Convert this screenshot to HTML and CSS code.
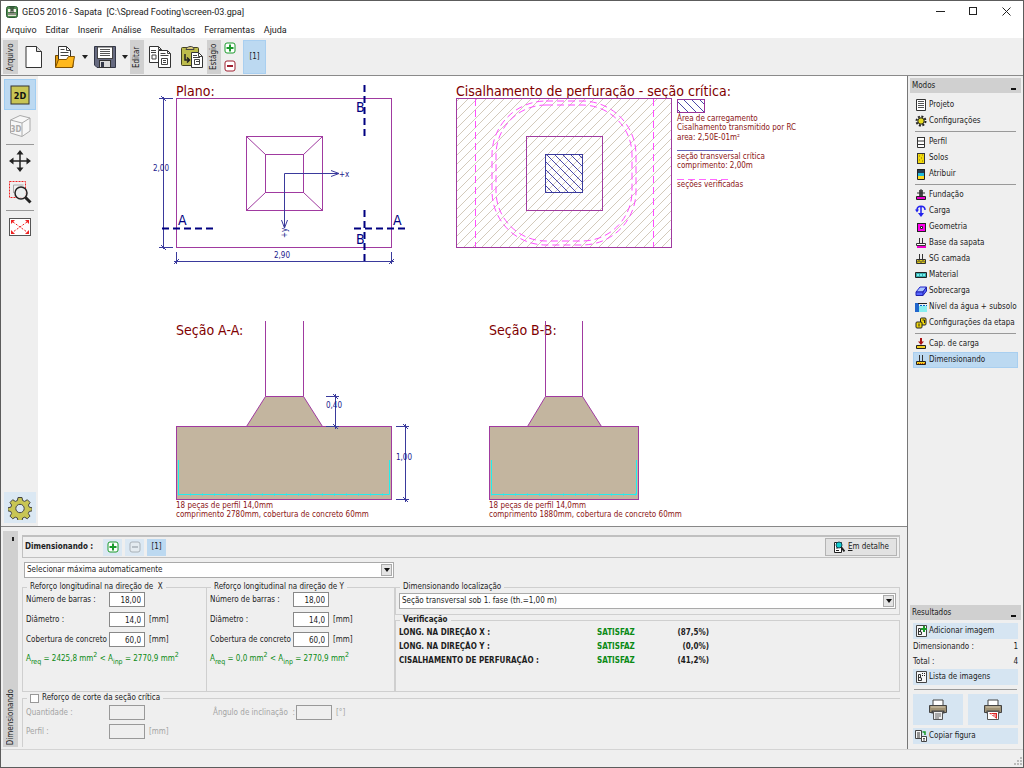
FILE: index.html
```html
<!DOCTYPE html>
<html lang="pt">
<head>
<meta charset="utf-8">
<title>GEO5 2016 - Sapata</title>
<link rel="stylesheet" href="styles.css">
</head>
<body>
<div class="window">
  <header class="titlebar">
    <svg class="app-icon" width="12" height="12" viewBox="0 0 12 12"><rect x=".5" y=".5" width="11" height="11" rx="2" fill="#4f8a4f" stroke="#2c5a34"/><path d="M2 3h3v2h2V3h3v3H2z" fill="#f4f4ea"/><path d="M2 7h8v3H2z" fill="#dfe8d0"/><path d="M5 1v6M7 1v6M2 8h8" stroke="#333"/></svg>
    <h1 class="title">GEO5 2016 - Sapata &nbsp;[C:\Spread Footing\screen-03.gpa]</h1>
    <div class="controls">
      <button class="control" aria-label="Minimizar"><svg width="9" height="9"><path d="M0 4.500h9" stroke="#222"/></svg></button>
      <button class="control" aria-label="Maximizar"><svg width="9" height="9"><rect x=".5" y=".5" width="7" height="7" fill="none" stroke="#222"/></svg></button>
      <button class="control" aria-label="Fechar"><svg width="9" height="9"><path d="M.5.5l8 8M8.500.5l-8 8" stroke="#222"/></svg></button>
    </div>
  </header>
  <nav class="menubar">
    <a href="#">Arquivo</a><a href="#">Editar</a><a href="#">Inserir</a><a href="#">Análise</a><a href="#">Resultados</a><a href="#">Ferramentas</a><a href="#">Ajuda</a>
  </nav>
  <div class="toolbar">
    <span class="vtab">Arquivo</span>
    <button class="tool tool-new" aria-label="Novo"><svg width="18" height="24"><path d="M1 1.500h10.500l5 5V22.500H1z" fill="#fff" stroke="#333"/><path d="M11.500 1.500v5h5" fill="#ddd" stroke="#333"/></svg></button>
    <button class="tool tool-open" aria-label="Abrir"><svg width="22" height="24"><path d="M1.500 22V10.500h4l1 2H19v9.500z" fill="#e39b0b" stroke="#704800"/><path d="M4.500 1.500h8l4 4V16h-12z" fill="#fff" stroke="#333"/><path d="M12.500 1.500v4h4M6.500 4.500h4M6.500 7.500h8M6.500 10.500h8" fill="none" stroke="#444"/><path d="M1.500 22.500l3-8h8l2-3h6l-2 11z" fill="#ffb81c" stroke="#805000"/></svg></button>
    <button class="tool tool-drop" aria-label="Abrir recente"><svg width="6" height="4"><path d="M0 0h6L3 4z" fill="#222"/></svg></button>
    <button class="tool tool-save" aria-label="Salvar"><svg width="24" height="24"><path d="M1.500 1.500h21v21H4l-2.500-2.500z" fill="#666a80" stroke="#333747"/><rect x="4.500" y="2" width="15" height="11.500" fill="#fff" stroke="#444"/><path d="M7 4.500h10M7 6.500h10M7 8.500h10M7 10.500h10" stroke="#555"/><rect x="6.500" y="15.500" width="11" height="7" fill="#d9d9d9" stroke="#333"/><rect x="8" y="17" width="3" height="5" fill="#333747"/></svg></button>
    <button class="tool tool-drop" aria-label="Opções de salvar"><svg width="6" height="4"><path d="M0 0h6L3 4z" fill="#222"/></svg></button>
    <span class="vtab vtab-narrow">Editar</span>
    <button class="tool tool-copy" aria-label="Copiar"><svg width="24" height="24"><path d="M1.500 1.500h9l3 3V17.500h-12z" fill="#fff" stroke="#333"/><path d="M10.500 1.500v3h3M3 5.500h5M3 7.500h5M4 10h4v4H4z" fill="none" stroke="#444"/><path d="M10.500 5.500h9l3 3V22.500h-12z" fill="#fff" stroke="#333"/><path d="M19.500 5.500v3h3M12.500 8.500h5M12.500 10.500h8M13.500 13.500h6v6h-6zM15 15.500h3M15 17.500h3" fill="none" stroke="#444"/></svg></button>
    <button class="tool tool-paste" aria-label="Colar"><svg width="24" height="24"><rect x="1.500" y="2.500" width="17" height="18" rx="1" fill="#bdbc4b" stroke="#444220"/><path d="M6 4.500c0-3 8-5 8 0z" fill="#d9c979" stroke="#444"/><path d="M5 9v6h4M7 12.500l2.500 2.500L7 17.500" fill="none" stroke="#222" stroke-width="1.500"/><path d="M11.500 7.500h7l4 4V22.500h-11z" fill="#fff" stroke="#333"/><path d="M18.500 7.500v4h4M13 10.500h4M13 12.500h7M14.500 14.500h5v5h-5zM16 16.500h3" fill="none" stroke="#444"/></svg></button>
    <span class="vtab vtab-narrow">Estágio</span>
    <div class="stage-edit">
      <button class="tool" aria-label="Adicionar estágio"><svg width="12" height="12"><rect x="1" y="1" width="10" height="10" rx="2" fill="#fff" stroke="#1b9a2c"/><path d="M6 2.500v7M2.500 6h7" stroke="#1b9a2c" stroke-width="2"/></svg></button>
      <button class="tool" aria-label="Remover estágio"><svg width="12" height="12"><rect x="1" y="1" width="10" height="10" rx="2" fill="#fff" stroke="#a02030"/><path d="M3 6h6" stroke="#a02030" stroke-width="2"/></svg></button>
    </div>
    <button class="stage">[1]</button>
  </div>

  <div class="main">
    <div class="work">
      <div class="view">
        <aside class="viewtools">
          <button class="vt vt-on" aria-label="Vista 2D"><svg width="20" height="20"><rect x="1" y="1" width="18" height="18" fill="#c8c554" stroke="#333"/><text x="10" y="14" class="ic2d">2D</text></svg></button>
          <button class="vt" aria-label="Vista 3D"><svg width="22" height="24"><path d="M1.500 6L11 1.500l10 2.500v13L13 22.500 1.500 19z" fill="#f7f7f7" stroke="#aaa"/><path d="M1.500 6L13 9v13M13 9l8-5" fill="none" stroke="#aaa"/><text x="7" y="18" class="ic3d">3D</text></svg></button>
          <hr>
          <button class="vt" aria-label="Mover"><svg width="22" height="22"><path d="M11 2v18M2 11h18" stroke="#222" stroke-width="1.500"/><path d="M11 0l3.500 4.500h-7zM11 22l3.500-4.500h-7zM0 11l4.500-3.500v7zM22 11l-4.500-3.500v7z" fill="#222"/></svg></button>
          <button class="vt" aria-label="Zoom"><svg width="24" height="24"><rect x="1.500" y="1.500" width="16" height="16" fill="none" stroke="#e22" stroke-dasharray="2 1"/><path d="M5.500 13v-8h10" fill="none" stroke="#aaa"/><circle cx="13" cy="13" r="6" fill="#e8eeee" fill-opacity=".8" stroke="#222" stroke-width="1.500"/><path d="M17.500 17.500l5 5" stroke="#222" stroke-width="3"/></svg></button>
          <hr>
          <button class="vt" aria-label="Ajustar"><svg width="22" height="18"><rect x=".5" y=".5" width="21" height="17" fill="#fff" stroke="#555"/><path d="M4 4l14 10M18 4L4 14" stroke="#e22" stroke-dasharray="2 1.500"/><path d="M2 2h4L2 6zM20 2v4l-4-4zM2 16v-4l4 4zM20 16h-4l4-4z" fill="#e22"/></svg></button>
          <button class="vt vt-gear" aria-label="Configurações"><svg width="24" height="24" viewBox="-12 -12 24 24"><path d="M-2-10.500h4l.6 3 2.100.9 2.600-1.700 2.800 2.800-1.700 2.600.9 2.100 2.900.6v3l-3 .7-.9 2 1.700 2.600-2.700 2.700-2.600-1.600-2.100.8-.6 3h-4l-.6-3-2.100-.8-2.600 1.600-2.700-2.700 1.600-2.600-.8-2-3-.7v-3l3-.6.8-2.100-1.600-2.600 2.700-2.800 2.600 1.700 2.100-.9z" fill="#c8c554" stroke="#444"/><circle r="4.200" cy=".5" fill="#dbe8f3" stroke="#444"/></svg></button>
        </aside>
        <div class="canvas">
<svg class="drawing" width="869" height="448" viewBox="38 76 869 448" role="img" aria-label="Desenho da sapata">
  <defs>
    <pattern id="soil" width="9" height="9" patternUnits="userSpaceOnUse"><path d="M-1 10L10-1M-1 1l2-2M8 10l2-2" stroke="#d3cabb"/></pattern>
    <pattern id="load" width="8" height="8" patternUnits="userSpaceOnUse"><path d="M-1-1l10 10M7-1l2 2M-1 7l2 2" stroke="#4848a8"/></pattern>
  </defs>
  <text x="176" y="96" class="head">Plano:</text>
  <g class="edge"><rect x="176.500" y="98.500" width="215" height="149"/><rect x="246.500" y="136.500" width="76" height="74"/><rect x="265.500" y="154.500" width="38" height="38"/><path d="M246.500 136.500l19 18M322.500 136.500l-19 18M246.500 210.500l19-18M322.500 210.500l-19-18"/></g>
  <g class="dim">
    <path d="M163.500 97v152M159 98.500h14M159 247.500h14M161 96l5 5M161 245l5 5M176.500 252v12M391.500 252v12M174 261.500h220M174 264l5-5M389 264l5-5"/>
    <path d="M284.500 228v-54.500H339M331 170.500l8 3-8 3M281.500 220l3 8 3-8"/>
  </g>
  <g class="cut"><path d="M162 228.500h52M405 228.500h-52M364.500 85v52M364.500 261v-52"/></g>
  <text x="153" y="171" class="dimt">2,00</text><text x="274" y="258" class="dimt">2,90</text>
  <text x="339" y="177" class="dimt">+x</text><text class="dimt" transform="translate(287 238) rotate(-90)">+y</text>
  <text x="178" y="225" class="cutt">A</text><text x="393" y="225" class="cutt">A</text><text x="356" y="112" class="cutt">B</text><text x="356" y="244" class="cutt">B</text>

  <text x="456" y="96" class="head">Cisalhamento de perfuração - seção crítica:</text>
  <g class="edge"><rect x="456.500" y="98.500" width="215" height="149" fill="url(#soil)"/><rect x="526.500" y="136.500" width="76" height="74"/></g>
  <rect x="545.500" y="154.500" width="37" height="38" fill="url(#load)" stroke="#3a3a9c"/>
  <g class="check"><path d="M475.500 99v148M653.500 99v148"/><rect x="492" y="101" width="144" height="144" rx="54"/><rect x="496" y="105" width="136" height="136" rx="50"/></g>
  <rect x="677.500" y="99.500" width="27" height="13" fill="url(#load)" stroke="#993399"/>
  <text x="677" y="121" class="note">Área de carregamento</text><text x="677" y="130" class="note">Cisalhamento transmitido por RC</text><text x="677" y="140" class="note">area: 2,50E-01m²</text>
  <path d="M677 150.500h56" stroke="#6666b8"/>
  <text x="677" y="159" class="note">seção transversal crítica</text><text x="677" y="168" class="note">comprimento: 2,00m</text>
  <path d="M677 179.500h52" stroke="#ff66ff" stroke-dasharray="7 4"/>
  <text x="677" y="187" class="note">seções verificadas</text>

  <text x="176" y="335" class="head">Seção A-A:</text>
  <g class="solid"><path d="M265.500 321v75.500M303.500 321v75.500" fill="none"/><path d="M265.500 396.500h38l19 30h-76z"/><rect x="176.500" y="426.500" width="215" height="73"/></g>
  <path d="M178.500 460v34.500h211V460" class="bar"/><path d="M178 494.500h212" class="bardots"/>
  <g class="dim"><path d="M335.500 394v35M326 396.500h13M326 426.500h13M333 394l5 5M333 424l5 5M405.500 424v78M396 426.500h13M396 499.500h13M403 424l5 5M403 497l5 5"/></g>
  <text x="326" y="408" class="dimt">0,40</text><text x="396" y="460" class="dimt">1,00</text>
  <text x="176" y="508" class="note">18 peças de perfil 14,0mm</text><text x="176" y="517" class="note">comprimento 2780mm, cobertura de concreto 60mm</text>

  <text x="489" y="335" class="head">Seção B-B:</text>
  <g class="solid"><path d="M545.500 321v75.500M582.500 321v75.500" fill="none"/><path d="M545.500 396.500h37l19 30h-74z"/><rect x="489.500" y="426.500" width="149" height="73"/></g>
  <path d="M491.500 460v34.500h145V460" class="bar"/><path d="M491 494.500h146" class="bardots"/>
  <text x="489" y="508" class="note">18 peças de perfil 14,0mm</text><text x="489" y="517" class="note">comprimento 1880mm, cobertura de concreto 60mm</text>
</svg>
        </div>
      </div>

      <section class="panel">
        <div class="side"><span class="pin"></span><span class="side-label">Dimensionando</span></div>
        <div class="form">
          <div class="formhead">
            <strong>Dimensionando :</strong>
            <button class="sq" aria-label="Adicionar"><svg width="12" height="12"><rect x="1" y="1" width="10" height="10" rx="2" fill="#fff" stroke="#1b9a2c"/><path d="M6 2.500v7M2.500 6h7" stroke="#1b9a2c" stroke-width="2"/></svg></button>
            <button class="sq" aria-label="Remover"><svg width="12" height="12"><rect x="1" y="1" width="10" height="10" rx="2" fill="#e4ebf0" stroke="#a9b1b8"/><path d="M3 6h6" stroke="#a9b1b8" stroke-width="1.500"/></svg></button>
            <button class="sq sq-on">[1]</button>
            <button class="detail"><svg width="12" height="12"><path d="M1.500 1.500h7v10h-7z" fill="#fff" stroke="#222"/><path d="M3 7h2M3 9.500h3" stroke="#222"/><circle cx="6" cy="4" r="3" fill="#1cc" stroke="#145"/><path d="M8 6l3.500 4.500" stroke="#222" stroke-width="2"/></svg><span><u>E</u>m detalhe</span></button>
          </div>
          <div class="combo combo-mode"><select aria-label="Modo de seleção"><option>Selecionar máxima automaticamente</option></select><span class="arrow"></span></div>
          <div class="groups">
            <fieldset class="group group-x">
              <legend>Reforço longitudinal na direção de &nbsp;X</legend>
              <div class="row"><label for="nx">Número de barras :</label><input id="nx" value="18,00"></div>
              <div class="row"><label for="dx">Diâmetro :</label><input id="dx" value="14,0"><span>[mm]</span></div>
              <div class="row"><label for="cx">Cobertura de concreto</label><input id="cx" value="60,0"><span>[mm]</span></div>
              <p class="area">A<sub>req</sub> = 2425,8 mm<sup>2</sup> &lt; A<sub>inp</sub> = 2770,9 mm<sup>2</sup></p>
            </fieldset>
            <fieldset class="group group-y">
              <legend>Reforço longitudinal na direção de Y</legend>
              <div class="row"><label for="ny">Número de barras :</label><input id="ny" value="18,00"></div>
              <div class="row"><label for="dy">Diâmetro :</label><input id="dy" value="14,0"><span>[mm]</span></div>
              <div class="row"><label for="cy">Cobertura de concreto</label><input id="cy" value="60,0"><span>[mm]</span></div>
              <p class="area">A<sub>req</sub> = 0,0 mm<sup>2</sup> &lt; A<sub>inp</sub> = 2770,9 mm<sup>2</sup></p>
            </fieldset>
            <div class="rightgroups">
              <fieldset class="group group-loc">
                <legend>Dimensionando localização</legend>
                <div class="combo"><select aria-label="Dimensionando localização"><option>Seção transversal sob 1. fase (th.=1,00 m)</option></select><span class="arrow"></span></div>
              </fieldset>
              <fieldset class="group group-ver">
                <legend><strong>Verificação</strong></legend>
                <table class="checks">
                  <tr><th>LONG. NA DIREÇÃO X :</th><td class="ok">SATISFAZ</td><td>(87,5%)</td></tr>
                  <tr><th>LONG. NA DIREÇÃO Y :</th><td class="ok">SATISFAZ</td><td>(0,0%)</td></tr>
                  <tr><th>CISALHAMENTO DE PERFURAÇÃO :</th><td class="ok">SATISFAZ</td><td>(41,2%)</td></tr>
                </table>
              </fieldset>
            </div>
          </div>
          <fieldset class="group shear">
            <legend><label class="tick"><input type="checkbox">Reforço de corte da seção crítica</label></legend>
            <div class="shear-cols">
              <div>
                <div class="row off"><label for="qt">Quantidade :</label><input id="qt" disabled></div>
                <div class="row off"><label for="pf">Perfil :</label><input id="pf" disabled><span>[mm]</span></div>
              </div>
              <div class="row off"><label for="an">Ângulo de inclinação &nbsp;:</label><input id="an" disabled><span>[°]</span></div>
            </div>
          </fieldset>
        </div>
      </section>
    </div>

    <aside class="sidebar">
      <h2 class="shead">Modos<button aria-label="Recolher modos"></button></h2>
      <nav class="modes">
        <a href="#"><svg width="12" height="12"><path d="M1.500.5h9v11h-9z" fill="#fff" stroke="#333"/><path d="M3 2.500h6M3 4.500h6M3 6.500h6M3 8.500h6" stroke="#555"/></svg>Projeto</a>
        <a href="#"><svg width="12" height="12"><circle cx="6" cy="6" r="4.500" fill="none" stroke="#222" stroke-width="2" stroke-dasharray="2 1.500"/><circle cx="6" cy="6" r="3.200" fill="#e8dc20" stroke="#222"/></svg>Configurações</a>
        <hr>
        <a href="#"><svg width="12" height="12"><path d="M2.500 1v10.500h7V1M2 1.500h8M2 5h8M2 8.500h8" fill="#fff" stroke="#333"/></svg>Perfil</a>
        <a href="#"><svg width="12" height="12"><rect x="2.500" y="1.500" width="7" height="10" fill="#f2d90c" stroke="#333"/><path d="M4 4h1M7 3h1M6 6h1M4 8h1M7 9h1" stroke="#8a7800"/></svg>Solos</a>
        <a href="#"><svg width="12" height="12"><path d="M2 1h8v4H2z" fill="#223a50"/><path d="M2 5h8v3H2z" fill="#2bd"/><path d="M2 8h8v3H2z" fill="#fd2"/><path d="M2.500 1.500h7v10h-7z" fill="none" stroke="#222"/></svg>Atribuir</a>
        <hr>
        <a href="#"><svg width="12" height="12"><path d="M4 1h4v6H4z" fill="#555"/><path d="M2 4h8M6 0v8" stroke="#333"/><path d="M1.500 7.500h9v3h-9z" fill="#e0c" stroke="#222"/></svg>Fundação</a>
        <a href="#"><svg width="12" height="12"><path d="M2 5c0-5 8-5 8 0M6 1.500v7" fill="none" stroke="#22e" stroke-width="1.500"/><path d="M6 12L3 8h6zM0 4.500h4L2 7.500z" fill="#22e"/></svg>Carga</a>
        <a href="#"><svg width="12" height="12"><rect x="2.500" y="2.500" width="8" height="8" fill="#f0e" stroke="#222"/><path d="M5.500 5.500h2v2h-2z" fill="#fff" stroke="#222"/></svg>Geometria</a>
        <a href="#"><svg width="12" height="12"><path d="M4.500 1v5M7.500 1v5M1.500 6.500h9v2h-9z" fill="#fff" stroke="#333"/><path d="M2 10h9" stroke="#e0c" stroke-width="2"/></svg>Base da sapata</a>
        <a href="#"><svg width="12" height="12"><path d="M4.500 1v5M7.500 1v5" stroke="#333"/><path d="M1.500 6.500h9v4h-9z" fill="#dcc81a" stroke="#333"/><path d="M2 9.500l2-2 2 2 2-2 2 2" fill="none" stroke="#333"/></svg>SG camada</a>
        <a href="#"><svg width="12" height="12"><path d="M.5 3.500h11v5H.5z" fill="#3aa" stroke="#222"/><path d="M2 6h8" stroke="#7ee" stroke-width="2" stroke-dasharray="2 1"/></svg>Material</a>
        <a href="#"><svg width="12" height="12"><path d="M1 7l4-5h6.500L8 7z" fill="#aac4ff" stroke="#22c"/><path d="M1 7h7v3.500H1zM8 7l3.500-5v4L8 10.500" fill="#56f" stroke="#22a"/></svg>Sobrecarga</a>
        <a href="#"><svg width="12" height="12"><path d="M0 2h4v9H0z" fill="#26c"/><path d="M4 5h8v6H4z" fill="#8ee"/><path d="M3 2.500h9" stroke="#222"/><path d="M5 4.500h7" stroke="#06c" stroke-dasharray="2 1"/></svg>Nível da água + subsolo</a>
        <a href="#"><svg width="12" height="12"><rect x="5.500" y="1" width="5.500" height="7" rx="1" fill="#f2d90c" stroke="#222"/><rect x="1" y="5" width="6" height="6" rx="1" fill="#f2d90c" stroke="#222"/><path d="M4 6.500v3M7.500 3h2v3" fill="none" stroke="#222"/></svg>Configurações da etapa</a>
        <hr>
        <a href="#"><svg width="12" height="12"><path d="M1.500 7.500h9v3h-9z" fill="#f2d020" stroke="#222"/><path d="M6 0v5" stroke="#a11" stroke-width="2"/><path d="M6 7L3 3.500h6z" fill="#a11"/></svg>Cap. de carga</a>
        <a href="#" class="sel"><svg width="12" height="12"><path d="M4.500 1v6M7.500 1v6" stroke="#333"/><path d="M1.500 7.500h9v3h-9z" fill="#f2d020" stroke="#222"/><path d="M3 9.500h7" stroke="#c40" stroke-dasharray="1 1"/></svg>Dimensionando</a>
      </nav>
      <h2 class="shead results-head">Resultados<button aria-label="Recolher resultados"></button></h2>
      <div class="results">
        <button class="rb"><svg width="12" height="12"><path d="M1.500.5h10v11h-10z" fill="#f7f7f7" stroke="#444"/><path d="M3.500 10V3.500h2V7h1v2.500h-3M3.500 6.500h2" fill="none" stroke="#333"/><path d="M9 1v6M6 4h6" stroke="#1a9a2a" stroke-width="2"/></svg>Adicionar imagem</button>
        <p class="count"><span>Dimensionando :</span><span>1</span></p>
        <p class="count"><span>Total :</span><span>4</span></p>
        <button class="rb rb-list"><svg width="12" height="12"><path d="M1.500.5h10v11h-10z" fill="#f7f7f7" stroke="#444"/><path d="M3.500 10V3.500h2V7h1v2.500h-3M3.500 6.500h2" fill="none" stroke="#333"/><path d="M7 2.500h1M9 2.500h1M7 4.500h1M9 4.500h1" stroke="#222"/></svg>Lista de imagens</button>
        <hr>
        <div class="printers">
          <button aria-label="Imprimir"><svg width="20" height="22"><path d="M5 1h10v6H5z" fill="#fff" stroke="#444"/><path d="M1.500 6.500h17v7h-17z" fill="#a09274" stroke="#444"/><path d="M3 8h14" stroke="#d4c8b0"/><path d="M3.500 11.500h13v3h-13z" fill="#444"/><path d="M5.500 12.500h9v8h-9z" fill="#eee" stroke="#555"/><path d="M7 15h6M7 17h6M7 19h4" stroke="#666"/></svg></button>
          <button aria-label="Imprimir figura"><svg width="20" height="22"><path d="M5 1h10v6H5z" fill="#fff" stroke="#444"/><path d="M1.500 6.500h17v7h-17z" fill="#a09274" stroke="#444"/><path d="M3 8h14" stroke="#d4c8b0"/><path d="M3.500 11.500h13v3h-13z" fill="#444"/><path d="M4.500 12.500h11v8h-11z" fill="#fff" stroke="#555"/><path d="M6 14h8v6z" fill="#d22"/><path d="M8 15l3 1M12 15v3" stroke="#fff"/></svg></button>
        </div>
        <button class="rb"><svg width="12" height="12"><path d="M.5.5h6v8h-6z" fill="#f7f7f7" stroke="#444"/><path d="M2 3h3M2 5h3M2 7h3" stroke="#333"/><path d="M6.500 6.500h5v5h-5z" fill="#fff" stroke="#444"/><path d="M8 8.500h2M8 10h2" stroke="#555"/><path d="M7.500 2h2.500v3" fill="none" stroke="#1a9a2a" stroke-width="1.500"/></svg>Copiar figura</button>
      </div>
    </aside>
  </div>
  <footer class="status"><svg width="10" height="10"><path d="M7 1h2M7 4h2M4 4h2M7 7h2M4 7h2M1 7h2" stroke="#bbb" stroke-width="2"/></svg></footer>
</div>
</body>
</html>
```
FILE: styles.css
```css
* { box-sizing: border-box; }
body { margin: 0; font: 8px/10px "DejaVu Sans Condensed", "DejaVu Sans", sans-serif; color: #1c1c1c; background: #efefef; }
button, input, select { font: inherit; color: inherit; margin: 0; padding: 0; border: 0; background: none; border-radius: 0; }
button { display: flex; align-items: center; justify-content: center; }
svg { display: block; flex: none; }
a { color: inherit; text-decoration: none; }
p, h1, h2 { margin: 0; font: inherit; }
hr { margin: 0; border: 0; border-top: 1px solid #999; }

.window { display: flex; flex-direction: column; min-height: 100vh; border: 1px solid #5c5c5c; }

.titlebar { display: flex; align-items: center; height: 21px; padding-left: 5px; background: #fff; }
.title { margin-left: 4px; font: 9px/12px Roboto, sans-serif; white-space: nowrap; }
.controls { display: flex; margin-left: auto; }
.control { width: 33px; height: 21px; }

.menubar { display: flex; align-items: center; gap: 9px; height: 16px; padding-left: 5px; background: #fff; font: 9px/12px Roboto, sans-serif; }

.toolbar { display: flex; align-items: center; height: 38px; padding: 0 2px; border-bottom: 1px solid #8a8a8a; }
.vtab { display: flex; align-items: center; justify-content: center; width: 15px; height: 34px; writing-mode: vertical-rl; transform: rotate(180deg); background: #d0d0d0; }
.vtab-narrow { width: 14px; }
.tool-new { width: 32px; }
.tool-open { width: 30px; }
.tool-drop { width: 10px; }
.tool-save { width: 30px; }
.tool-copy { width: 32px; }
.tool-paste { width: 31px; }
.stage-edit { display: flex; flex-direction: column; gap: 6px; padding: 0 7px 0 3px; }
.stage { width: 23px; height: 34px; background: #bcd9f1; border: 1px solid #a9cff0; }

.main { display: grid; grid-template-columns: minmax(0, 1fr) 116px; flex: 1; }
.work { display: flex; flex-direction: column; min-width: 0; }
.view { display: flex; flex: 1; min-height: 0; }
.viewtools { display: flex; flex-direction: column; align-items: center; width: 37px; padding: 3px 3px 3px 3px; flex: none; }
.viewtools hr { width: 28px; margin-top: 3px; }
.vt { width: 32px; height: 31px; flex: none; }
.vt-on { background: #bcd9f1; border: 1px solid #a0cdf2; }
.vt-gear { margin-top: auto; background: #dbe8f3; }
.ic2d { font: bold 9px "DejaVu Sans Condensed", sans-serif; text-anchor: middle; fill: #111; }
.ic3d { font: bold 8px "DejaVu Sans Condensed", sans-serif; text-anchor: middle; fill: #aaa; }
.canvas { flex: 1; min-width: 0; background: #fff; overflow: hidden; }
.drawing { max-width: 100%; }
.head { font: 14px "DejaVu Sans Condensed", sans-serif; fill: #800000; }
.note { font: 8px "DejaVu Sans Condensed", sans-serif; fill: #8b1414; }
.dimt { font: 8px "DejaVu Sans Condensed", sans-serif; fill: #20208c; }
.cutt { font: 14px "DejaVu Sans Condensed", sans-serif; fill: #000080; }
.edge, .edge rect:not([fill]) { fill: none; stroke: #a03aa0; }
.dim { fill: none; stroke: #3a3a9c; }
.cut { stroke: #000080; stroke-width: 2; stroke-dasharray: 7 4; }
.check { fill: none; stroke: #ff4dff; stroke-dasharray: 7 4; }
.solid { fill: #c3b59f; stroke: #a03aa0; }
.bar { fill: none; stroke: #2ee; }
.bardots { stroke: #2ee; stroke-width: 2; stroke-dasharray: 1 11; }

.panel { display: flex; border-top: 1px solid #888; padding: 4px 7px 2px 2px; }
.side { display: flex; flex-direction: column; align-items: center; justify-content: space-between; width: 15px; padding: 6px 0 2px; background: #d0d0d0; }
.pin { width: 2px; height: 4px; margin-left: 5px; background: #222; }
.side-label { writing-mode: vertical-rl; transform: rotate(180deg); }
.form { flex: 1; min-width: 0; padding: 4px 0 0 4px; }
.formhead { display: flex; align-items: center; gap: 3px; height: 23px; padding: 0 2px; border: 1px solid #c0c0c0; border-top-width: 2px; }
.formhead strong { width: 75px; white-space: nowrap; }
.sq { width: 19px; height: 17px; background: #dbe8f3; }
.sq-on { background: #bcd9f1; }
.detail { gap: 3px; width: 72px; height: 18px; margin-left: auto; background: #e2e2e2; border: 1px solid #b4b4b4; }
.combo { position: relative; height: 16px; border: 1px solid #aaa; background: #fff; }
.combo select { display: block; appearance: none; width: 100%; height: 14px; padding: 0 16px 0 2px; }
.combo .arrow { position: absolute; top: 1px; right: 1px; width: 11px; height: 12px; background: #e4e4e4; border: 1px solid #aaa; pointer-events: none; }
.combo .arrow::after { content: ""; position: absolute; top: 3px; left: 2px; border: 3px solid transparent; border-top: 4px solid #111; border-bottom: 0; width: 0; }
.combo-mode { width: 370px; max-width: 100%; margin: 4px 0 4px 2px; }
.groups { display: grid; grid-template-columns: 185px 188px minmax(0, 1fr); }
.group { min-width: 0; margin: 0; padding: 0 3px; border: 1px solid #cfcfcf; }
.group legend { height: 10px; margin-left: 1px; padding: 0 3px; white-space: nowrap; }
.group-y { border-left-width: 0; }
.group-x, .group-y { min-height: 110px; }
.row { display: grid; grid-template-columns: 83px 36px 1fr; align-items: center; height: 15px; margin-bottom: 5px; white-space: nowrap; }
.row input { width: 36px; height: 15px; padding: 1px 3px 0; border: 1px solid #888; background: #fff; text-align: right; }
.row span { padding-left: 4px; }
.area { height: 14px; color: #0a8a14; line-height: 14px; white-space: nowrap; }
.area sub, .area sup { font-size: 7px; line-height: 0; }
.rightgroups { display: flex; flex-direction: column; }
.group-loc { height: 33px; padding-top: 1px; }
.group-ver { flex: 1; padding-top: 1px; }
.checks { border-collapse: collapse; }
.checks th, .checks td { height: 14px; padding: 0; font-weight: bold; text-align: left; white-space: nowrap; }
.checks th { width: 198px; }
.checks td { width: 40px; text-align: right; }
.checks .ok { width: 72px; color: #0a8a14; text-align: left; }
.shear { border-width: 1px 0 0 1px; margin-top: 1px; min-height: 54px; }
.tick { display: flex; align-items: center; gap: 3px; }
.tick input { appearance: none; width: 9px; height: 9px; background: #fff; border: 1px solid #999; }
.shear-cols { display: grid; grid-template-columns: 187px 1fr; padding-top: 2px; }
.row.off { margin-bottom: 4px; color: #a4a4a4; }
.row.off input { background: #efefef; border-color: #999; }

.sidebar { display: flex; flex-direction: column; padding: 2px 2px 5px 2px; border-left: 1px solid #777; }
.shead { display: flex; align-items: center; justify-content: space-between; height: 15px; padding: 0 5px 0 2px; background: #d0d0d0; }
.shead button { width: 5px; height: 2px; margin-top: 6px; background: #111; }
.modes { padding: 4px 3px; }
.modes a { display: flex; align-items: center; gap: 2px; height: 16px; padding-left: 2px; white-space: nowrap; }
.modes hr { margin: 2px; }
.modes .sel { background: #bcd9f1; outline: 1px solid #a9cff0; outline-offset: -1px; }
.results-head { margin-top: auto; }
.results { padding: 3px 3px 0; }
.rb { width: 100%; height: 16px; gap: 2px; padding-left: 2px; justify-content: flex-start; background: #d6e5f2; }
.count { display: flex; justify-content: space-between; height: 15px; line-height: 15px; }
.results hr { margin: 4px 1px; }
.printers { display: grid; grid-template-columns: 1fr 1fr; gap: 5px; margin-bottom: 3px; }
.printers button { height: 31px; background: #d6e5f2; }
.status { display: flex; align-items: flex-end; justify-content: flex-end; height: 18px; border-top: 1px solid #d4d4d4; }
```
